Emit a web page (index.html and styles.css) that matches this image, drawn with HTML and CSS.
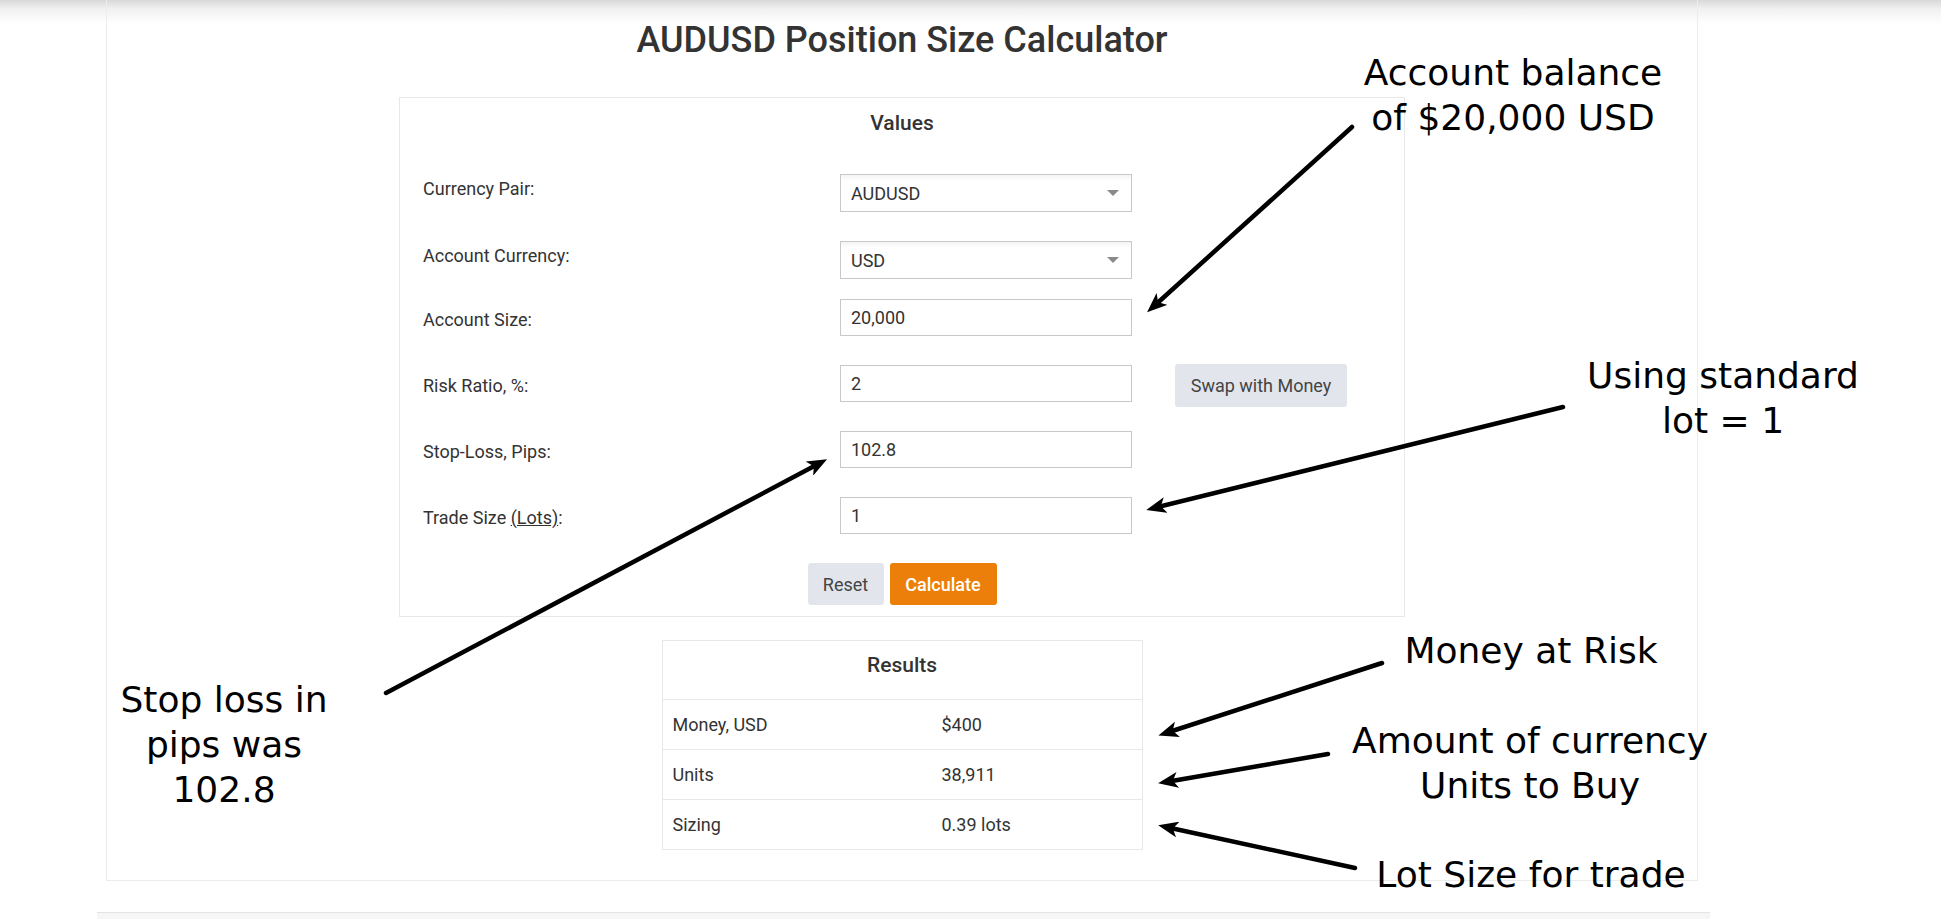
FILE: index.html
```html
<!DOCTYPE html>
<html lang="en">
<head>
    <meta charset="UTF-8">
    <meta name="viewport" content="width=device-width, initial-scale=1.0">
    <title>AUDUSD Position Size Calculator</title>
    <link rel="stylesheet" href="styles.css">
</head>
<body>
    <div class="page">
        <div class="panel">
            <h1 class="calc-title">AUDUSD Position Size Calculator</h1>

            <form class="values-box" onsubmit="return false">
                <h2 class="box-title">Values</h2>

                <div class="form-rows">
                    <div class="form-row form-row--select">
                        <label for="pair">Currency Pair:</label>
                        <div class="select-wrap">
                            <select id="pair" name="pair">
                                <option>AUDUSD</option>
                            </select>
                        </div>
                    </div>

                    <div class="form-row form-row--select">
                        <label for="currency">Account Currency:</label>
                        <div class="select-wrap">
                            <select id="currency" name="currency">
                                <option>USD</option>
                            </select>
                        </div>
                    </div>

                    <div class="form-row form-row--tight">
                        <label for="size">Account Size:</label>
                        <input type="text" id="size" name="size" value="20,000">
                    </div>

                    <div class="form-row">
                        <label for="risk">Risk Ratio, %:</label>
                        <input type="text" id="risk" name="risk" value="2">
                        <button type="button" class="btn btn-grey btn-swap">Swap with Money</button>
                    </div>

                    <div class="form-row">
                        <label for="stop">Stop-Loss, Pips:</label>
                        <input type="text" id="stop" name="stop" value="102.8">
                    </div>

                    <div class="form-row">
                        <label for="lots">Trade Size <a href="#" class="lots-link">(Lots)</a>:</label>
                        <input type="text" id="lots" name="lots" value="1">
                    </div>
                </div>

                <div class="actions">
                    <button type="reset" class="btn btn-grey">Reset</button>
                    <button type="button" class="btn btn-orange">Calculate</button>
                </div>
            </form>

            <table class="results">
                <thead>
                    <tr><th colspan="2">Results</th></tr>
                </thead>
                <tbody>
                    <tr><td class="col-name">Money, USD</td><td>$400</td></tr>
                    <tr><td class="col-name">Units</td><td>38,911</td></tr>
                    <tr><td class="col-name">Sizing</td><td>0.39 lots</td></tr>
                </tbody>
            </table>
        </div>

        <div class="bottom-bar"></div>

        <!-- пояснения поверх скриншота -->
        <div class="note note-balance">Account balance<br>of $20,000 USD</div>
        <div class="note note-lot">Using standard<br>lot = 1</div>
        <div class="note note-stop">Stop loss in<br>pips was<br>102.8</div>
        <div class="note note-money">Money at Risk</div>
        <div class="note note-units">Amount of currency<br>Units to Buy</div>
        <div class="note note-sizing">Lot Size for trade</div>

        <svg class="arrows" width="1941" height="920" viewBox="0 0 1941 920">
            <defs>
                <marker id="head" viewBox="0 0 20 16" refX="12" refY="8" markerWidth="20" markerHeight="16" markerUnits="userSpaceOnUse" orient="auto">
                    <path d="M0,0 L20,8 L0,16 L5,8 Z" fill="#000"/>
                </marker>
            </defs>
            <g stroke="#000" stroke-width="4.5" stroke-linecap="round" marker-end="url(#head)">
                <line x1="1352" y1="127" x2="1153" y2="307"/>
                <line x1="1563" y1="407" x2="1154" y2="508"/>
                <line x1="386" y1="693" x2="820" y2="463"/>
                <line x1="1382" y1="663" x2="1166" y2="733"/>
                <line x1="1328" y1="754" x2="1166" y2="782"/>
                <line x1="1355" y1="868" x2="1166" y2="827"/>
            </g>
        </svg>
    </div>
</body>
</html>
```

FILE: styles.css
```css
body, html {
    margin: 0;
    padding: 0;
}

body {
    font-family: Roboto, "Liberation Sans", Arial, sans-serif;
    color: #333;
    background: #fff linear-gradient(to bottom, #d8d8d8 0, #f1f1f1 9px, #fff 24px) no-repeat;
    overflow: hidden;
}

.page {
    position: relative;
    width: 1941px;
    height: 920px;
    overflow: hidden;
}

.panel {
    margin-left: 106px;
    width: 1592px;
    box-sizing: border-box;
    border: 1px solid #ececec;
    border-top: none;
    padding: 19px 0 30px;
}

.calc-title {
    margin: 0;
    font-size: 36px;
    line-height: 42px;
    font-weight: 500;
    text-align: center;
    color: #333;
}

/* Блок с полями */
.values-box {
    width: 1006px;
    box-sizing: border-box;
    margin: 36px auto 0;
    border: 1px solid #e8e8e8;
    padding: 13px 0 11px 23px;
}

.box-title {
    margin: 0;
    font-size: 21px;
    line-height: 24px;
    font-weight: 500;
    text-align: center;
    padding-right: 23px;
}

.form-rows {
    display: flex;
    flex-direction: column;
    gap: 29px;
    margin-top: 39px;
}

.form-row {
    display: grid;
    grid-template-columns: 374px 292px 172px;
    column-gap: 43px;
    align-items: center;
    height: 37px;
    font-size: 18px;
}

.form-row label {
    color: #333;
    margin-top: 4px;
}

.form-row--select {
    height: 38px;
}

.form-row--select label {
    margin-top: -10px;
}

.form-row--tight {
    margin-top: -9px;
}

.lots-link {
    color: #333;
    text-decoration: underline;
}

input, select {
    font-family: inherit;
    font-size: 18px;
    color: #333;
    width: 292px;
    height: 37px;
    box-sizing: border-box;
    border: 1px solid #c8c8c8;
    border-radius: 0;
    padding: 0 10px;
    background: #fff;
    outline: none;
}

.select-wrap {
    position: relative;
    width: 292px;
}

.select-wrap select {
    height: 38px;
    appearance: none;
    -webkit-appearance: none;
    background: linear-gradient(to bottom, #f4f4f4 0, #fff 6px);
}

.select-wrap::after {
    content: "";
    position: absolute;
    right: 13px;
    top: 16px;
    border-left: 6px solid transparent;
    border-right: 6px solid transparent;
    border-top: 6px solid #8a8a8a;
    pointer-events: none;
}

.btn {
    font-family: inherit;
    font-size: 18px;
    border: none;
    border-radius: 3px;
    cursor: pointer;
    height: 42px;
    padding: 0 16px;
}

.btn-grey {
    background-color: #e2e6ec;
    color: #444;
}

.btn-orange {
    background-color: #ec7f0a;
    color: #fff;
    font-weight: 500;
}

.btn-swap {
    width: 172px;
    height: 43px;
    padding: 0;
    margin: -1px 0 -5px;
}

.actions {
    display: flex;
    justify-content: center;
    gap: 6px;
    margin-top: 29px;
    padding-right: 23px;
}

.actions .btn-grey {
    width: 76px;
    padding: 0;
}

.actions .btn-orange {
    width: 107px;
    padding: 0;
}

/* Результаты */
.results {
    width: 481px;
    margin: 23px auto 0;
    border-collapse: collapse;
    font-size: 18px;
}

.results th, .results td {
    border: 1px solid #e8e8e8;
}

.results th {
    height: 59px;
    font-size: 21px;
    font-weight: 500;
    text-align: center;
    padding: 0 0 10px;
    box-sizing: border-box;
}

.results td {
    height: 49px;
    padding: 0 10px;
    border-left: none;
    border-right: none;
}

.results td:first-child {
    border-left: 1px solid #e8e8e8;
}

.results td:last-child {
    border-right: 1px solid #e8e8e8;
}

.results .col-name {
    width: 249px;
}

.bottom-bar {
    margin-top: 31px;
    margin-left: 97px;
    width: 1613px;
    height: 6px;
    background: #f6f6f6;
    border-top: 1px solid #e4e4e4;
}

/* Подписи и стрелки */
.note {
    position: absolute;
    width: 400px;
    font-family: "DejaVu Sans", Verdana, sans-serif;
    font-size: 36px;
    line-height: 45px;
    text-align: center;
    color: #000;
    white-space: nowrap;
}

.note-balance { left: 1313px; top: 50px; }
.note-lot     { left: 1523px; top: 353px; }
.note-stop    { left: 24px;   top: 677px; }
.note-money   { left: 1331px; top: 628px; }
.note-units   { left: 1330px; top: 718px; }
.note-sizing  { left: 1331px; top: 852px; }

.arrows {
    position: absolute;
    left: 0;
    top: 0;
    pointer-events: none;
}
```
